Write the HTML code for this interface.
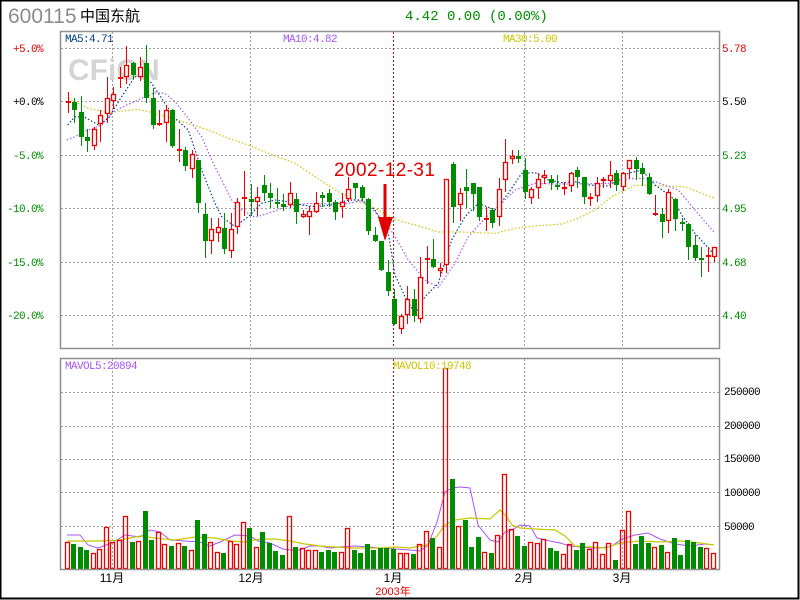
<!DOCTYPE html>
<html><head><meta charset="utf-8">
<style>
html,body{margin:0;padding:0;background:#fff;}
#wrap{position:relative;width:800px;height:600px;overflow:hidden;background:#fff;}
svg{position:absolute;left:0;top:0;}
</style></head>
<body><div id="wrap">
<svg id="s" width="800" height="600" viewBox="0 0 800 600" xmlns="http://www.w3.org/2000/svg" font-family="Liberation Mono, monospace">
<rect x="0.5" y="0.5" width="798" height="598" fill="#fff" stroke="#000" stroke-width="2"/>
<text x="8" y="23" font-family="Liberation Sans, sans-serif" font-size="21" fill="#8c8c8c">600115</text>
<text x="80" y="21" font-family="Liberation Sans, 'Noto Sans CJK SC', sans-serif" font-size="15" fill="#000">中国东航</text>
<text x="405" y="20" font-family="Liberation Mono, 'Noto Sans CJK SC', monospace" font-size="14" fill="#008c00">4.42 0.00 (0.00%)</text>
<g id="grid" stroke="#a0a0a0" stroke-dasharray="2,2" stroke-width="1"></g>
<text x="68" y="80" font-family="Liberation Sans, sans-serif" font-weight="bold" font-size="30" fill="#d4d4d4">CFiCN</text>
<g id="ma"></g>
<g id="c"></g>
<g id="v"></g>
<rect x="60.5" y="31.5" width="659" height="317" fill="none" stroke="#909090" stroke-width="1.5"/>
<rect x="60.5" y="358.5" width="659" height="211" fill="none" stroke="#909090" stroke-width="1.5"/>
<g font-size="11" letter-spacing="-0.6">
<text x="65" y="42" fill="#00408c">MA5:4.71</text>
<text x="283" y="42" fill="#a855f7">MA10:4.82</text>
<text x="503" y="42" fill="#c8c800">MA30:5.00</text>
<text x="65" y="369" fill="#a855f7">MAVOL5:20894</text>
<text x="393" y="369" fill="#c8c800">MAVOL10:19748</text>
<g text-anchor="end">
<text x="43" y="52" fill="#e00000">+5.0%</text>
<text x="43" y="105" fill="#000">+0.0%</text>
<text x="43" y="159" fill="#008c00">-5.0%</text>
<text x="43" y="212" fill="#008c00">-10.0%</text>
<text x="43" y="266" fill="#008c00">-15.0%</text>
<text x="43" y="319" fill="#008c00">-20.0%</text>
</g>
<text x="722" y="52" fill="#e00000">5.78</text>
<text x="722" y="105" fill="#000">5.50</text>
<text x="722" y="159" fill="#008c00">5.23</text>
<text x="722" y="212" fill="#008c00">4.95</text>
<text x="722" y="266" fill="#008c00">4.68</text>
<text x="722" y="319" fill="#008c00">4.40</text>
<text x="724" y="395" fill="#000">250000</text>
<text x="724" y="429" fill="#000">200000</text>
<text x="724" y="462" fill="#000">150000</text>
<text x="724" y="496" fill="#000">100000</text>
<text x="724" y="530" fill="#000">50000</text>
</g>
<g font-family="Liberation Sans, 'Noto Sans CJK SC', sans-serif" font-size="12" text-anchor="middle">
<text x="112" y="582" fill="#000">11月</text>
<text x="251" y="582" fill="#000">12月</text>
<text x="393" y="582" fill="#000">1月</text>
<text x="524" y="582" fill="#000">2月</text>
<text x="622" y="582" fill="#000">3月</text>
<text x="393" y="595" fill="#e00000" font-size="11">2003年</text>
</g>
<text x="334" y="176" font-family="Liberation Sans, sans-serif" font-size="19" fill="#e00000" textLength="101">2002-12-31</text>
<line x1="385" y1="184" x2="385" y2="220" stroke="#e00000" stroke-width="3"/>
<polygon points="378,217 393,217 385,241" fill="#e00000"/>
</svg>
</div>
<script>
var NS="http://www.w3.org/2000/svg";
function el(p,t,a){var e=document.createElementNS(NS,t);for(var k in a)e.setAttribute(k,a[k]);document.getElementById(p).appendChild(e);return e;}
[48,101,155,208,262,315].forEach(function(y){el("grid","line",{x1:61,x2:719,y1:y+.5,y2:y+.5});});
[392,425.5,458.5,492,526].forEach(function(y){el("grid","line",{x1:61,x2:719,y1:Math.round(y)+.5,y2:Math.round(y)+.5});});
[112,250,524,622].forEach(function(x){el("grid","line",{x1:x+.5,x2:x+.5,y1:32,y2:348});el("grid","line",{x1:x+.5,x2:x+.5,y1:359,y2:569});});
el("grid","line",{x1:393.5,x2:393.5,y1:32,y2:348,stroke:"#e00000"});
el("grid","line",{x1:393.5,x2:393.5,y1:359,y2:569,stroke:"#e00000"});
var C=[
["r",101.7,101.7,91.7,111.7],["g",101.7,110,98,121.7],["g",111.7,136.7,96,145],["g",136.7,140.7,129,150.7],["r",129,145.7,127,149],
["r",115,124.3,110,140.7],["r",98.3,114.3,77.3,121.7],["r",94,101,86.7,108.3],["r",78.3,78.3,67.3,87.3],["r",65,76.7,46,82.7],
["g",62.7,75,62,78.3],["r",67.3,76.7,56.7,80],["g",62.7,98.3,45,101.7],["g",98.3,125,88.3,128.3],["r",124,124,110,125],
["r",110,122.7,105,140.7],["g",110,146,109,147.3],["r",150,150,129.3,160.7],["g",150,166,146.7,170],["r",154,169.3,150,177.3],
["g",160,203.3,160,211.7],["g",214,240.7,202.7,256.7],["r",229.3,240.7,218,252.7],["r",226.7,232.7,218,240.7],["g",228.3,249,212.7,252.7],
["r",229.3,250.7,212.7,256.7],["r",202.3,227.3,198,233.3],["r",197.7,197.7,171,215],["g",199.3,201.7,184,215],["r",197.3,201.7,186.7,215],
["g",185,192.7,175,200],["g",193.3,198.3,183.3,206.7],["g",202,203.3,188,206.7],["g",204,207.3,194,210],["r",193.3,205,181.7,206.7],
["g",199.3,211.7,193.3,223.3],["r",214,217.3,210,217.3],["r",210.7,217.3,206,234],["r",202.7,211.7,192.3,211.7],["g",195,198.3,191.7,206],
["g",193.3,201.7,189.3,206],["g",202.3,211.7,200,219.3],["r",202.3,207.3,193.3,217.3],["r",189.3,199.3,176.7,200.7],["g",183.3,188.3,182.7,198.3],
["g",187.3,198.3,185,200],["g",199.3,230.7,198,234],["g",235,240.7,226.7,240.7],["g",240.7,270,240.7,270],["g",272.3,290.7,260,295],
["g",299.3,324,289.3,324],["r",316,329.3,314,333.3],["r",299.3,315,286,323.3],["g",299.3,316,289.3,320.7],["r",276.7,319.3,256.7,321.7],
["r",258.7,258.7,246,283.3],["g",258.7,267.3,239.3,267.3],["r",268.3,271,263.3,276],["r",179.3,265.3,179.3,271.7],["g",164.3,207.3,161.7,221.7],
["r",193.3,205,188.3,220],["g",187.3,190.7,169.3,206.7],["g",183.3,194,183.3,210],["g",187.3,217.3,186.7,220],["r",219.3,219.3,206.7,230],
["g",210,223.3,208.3,226.7],["r",189.3,217.3,178.3,225],["r",162.3,180,139.3,190.7],["r",156,159,150,163.3],["g",156,159.3,150,161.7],
["g",170,192.3,158.3,198.3],["r",189.3,198.3,186.7,202.7],["r",179.3,188.3,173.3,198.3],["r",175.3,178.3,170,182.7],["g",179.3,182.7,175,189.3],
["g",185,186,175,189.3],["r",186.7,188.7,181.7,194.3],["r",173.3,186,171.7,190.7],["g",170,176.7,166.7,186.7],["g",177.3,196.7,176.7,202.7],
["r",197.3,199.3,193.3,205],["r",183.3,196,176.7,200.7],["r",179.3,180.7,176.7,187.3],["r",175.3,180.7,160.7,186.7],["g",173.3,185,170,190],
["r",173.3,186.7,171.7,190],["r",160,169.3,160,178.3],["g",160,169.3,157.3,179.3],["g",167.7,174.3,162.7,185],["g",176.7,194.3,173.3,194.3],
["r",214,214,195,215],["g",214,221.7,208.3,237.3],["r",191.7,221,189.3,231.7],["g",199.3,219.3,198.3,230],["g",222,224,218.3,230],
["g",224,246.7,222.7,258.7],["g",245,257.7,235,260],["g",258.3,259.3,246.7,276],["r",256,256,246.7,270.7],["r",247.3,256.7,246.7,260.7]];
var V=[542,544,547,550,553.3,549.3,527.3,542,540,516.3,542,541.3,511,540,532.3,544,546,543.3,546,550,520,534,542,552.3,553,541.3,544,522.3,528,547.3,532,543,551,555,516.3,547,548.3,550.3,550.3,552,550,552,552,528.3,550,553,544,550,548,548,549,553.3,553.3,554,
544,531.3,538,547.3,368.3,479,526,520,547,537,552.3,553,535.3,474.3,528.7,536,546,542.3,543.3,539.3,548,551,554.3,544,549.7,543,548.7,542.3,554.3,543.3,560,530.3,511.3,543.7,536,542.7,547.3,544.7,552.3,538,555,540,542,547,548.3,553];
var RED="#ee0000",GRN="#008c00";
C.forEach(function(c,i){
 var x=Math.round(67.7+6.53*i);
 var t=Math.round(c[1]),b=Math.round(c[2]),h=Math.round(c[3]),l=Math.round(c[4]);
 if(c[0]=="g"){
  el("c","line",{x1:x+.5,x2:x+.5,y1:h,y2:l+1,stroke:GRN});
  el("c","rect",{x:x-2,y:t,width:5,height:Math.max(2,b-t),fill:GRN});
 } else {
  el("c","line",{x1:x+.5,x2:x+.5,y1:h,y2:l+1,stroke:RED});
  if(b-t<2){el("c","rect",{x:x-2,y:t-1,width:5,height:2,fill:RED});}
  else{el("c","rect",{x:x-1.5,y:t+.5,width:4,height:b-t-1,fill:"#fff",stroke:RED,"stroke-width":1.3});}
 }
 var vy=Math.round(V[i]);
 var vx=Math.round(64.5+6.53*i);
 if(c[0]=="g") el("v","rect",{x:vx,y:vy,width:5,height:569-vy,fill:GRN});
 else el("v","rect",{x:vx+.5,y:vy+.5,width:4,height:569-vy-1,fill:"none",stroke:RED,"stroke-width":1.3});
});
function pl(pts3,pts4,col){
 var p=[];pts3.forEach(function(q){p.push((55+q[0]/3)+","+(30+q[1]/3));});
 pts4.forEach(function(q){p.push((395+q[0]/3)+","+(30+q[1]/3));});
 el("ma","polyline",{points:p.join(" "),fill:"none",stroke:col,"stroke-width":1.2,"stroke-dasharray":"1.5,2"});
}
pl([[40,205],[100,235],[160,248],[250,238],[280,245],[340,262],[400,280],[460,300],[520,325],[580,345],[640,370],[720,400],[780,440],[840,480],[900,510],[960,535],[1020,568]],
   [[0,568],[60,585],[130,606],[200,606],[300,610],[360,595],[420,588],[500,582],[550,565],[600,540],[650,500],[720,466],[760,466],[800,468],[870,470],[920,490],[960,505]],"#c8c800");
pl([[35,330],[60,320],[100,300],[140,285],[175,245],[215,225],[250,210],[270,200],[300,188],[330,190],[360,215],[400,265],[440,320],[470,390],[500,450],[530,510],[560,540],[600,562],[640,550],[700,528],[760,520],[820,522],[880,520],[920,512],[960,545],[1000,590],[1020,620]],
   [[0,620],[40,690],[90,750],[130,772],[180,700],[220,620],[270,565],[320,520],[360,480],[420,460],[480,462],[560,462],[640,460],[700,446],[750,445],[800,462],[850,480],[900,540],[960,610]],"#a855f7");
pl([[38,285],[60,260],[90,262],[130,285],[160,265],[200,200],[240,140],[270,140],[290,160],[320,205],[360,265],[400,300],[440,420],[480,520],[500,560],[540,590],[580,560],[620,520],[660,510],[700,515],[740,525],[780,530],[830,525],[880,510],[920,510],[960,540],[1000,610],[1020,735]],
   [[0,735],[30,800],[60,850],[90,800],[130,760],[170,630],[210,560],[250,520],[300,540],[340,490],[380,430],[420,428],[460,450],[500,458],[540,455],[580,465],[640,468],[700,430],[740,420],[780,465],[830,500],[860,555],[900,610],[950,665]],"#00408c");
el("ma","polyline",{points:"67,535 80,535 88,545 98,548 112,543 125,535 140,537 150,530 160,532 170,540 185,541 200,542 210,546 220,542 235,535 250,536 258,541 270,543 283,549 290,550 300,550 310,546 320,546 330,548 340,547 355,546 370,547 380,548 395,549 410,550 420,551 428,545 437,522 445,492 452,488 460,487 470,488 478,525 490,540 498,542 505,532 512,530 520,525 530,526 537,538 550,541 560,543 570,546 580,547 590,548 600,548 612,546 622,539 635,535 648,533 660,539 675,544 690,546 705,544 714,545",fill:"none",stroke:"#a855f7","stroke-width":1});
el("ma","polyline",{points:"67,541 100,541 120,540 140,536 155,538 175,540 195,537 215,538 230,541 245,542 260,539 275,539 290,541 305,544 320,546 335,547 350,548 365,548 380,548 395,547 410,548 420,546 428,545 437,536 445,525 455,520 470,518 490,519 500,510 506,516 512,525 520,528 535,529 555,530 565,536 575,546 590,547 605,548 620,543 640,541 660,542 680,541 700,543 714,545",fill:"none",stroke:"#c8c800","stroke-width":1.2});
</script>
</body></html>
